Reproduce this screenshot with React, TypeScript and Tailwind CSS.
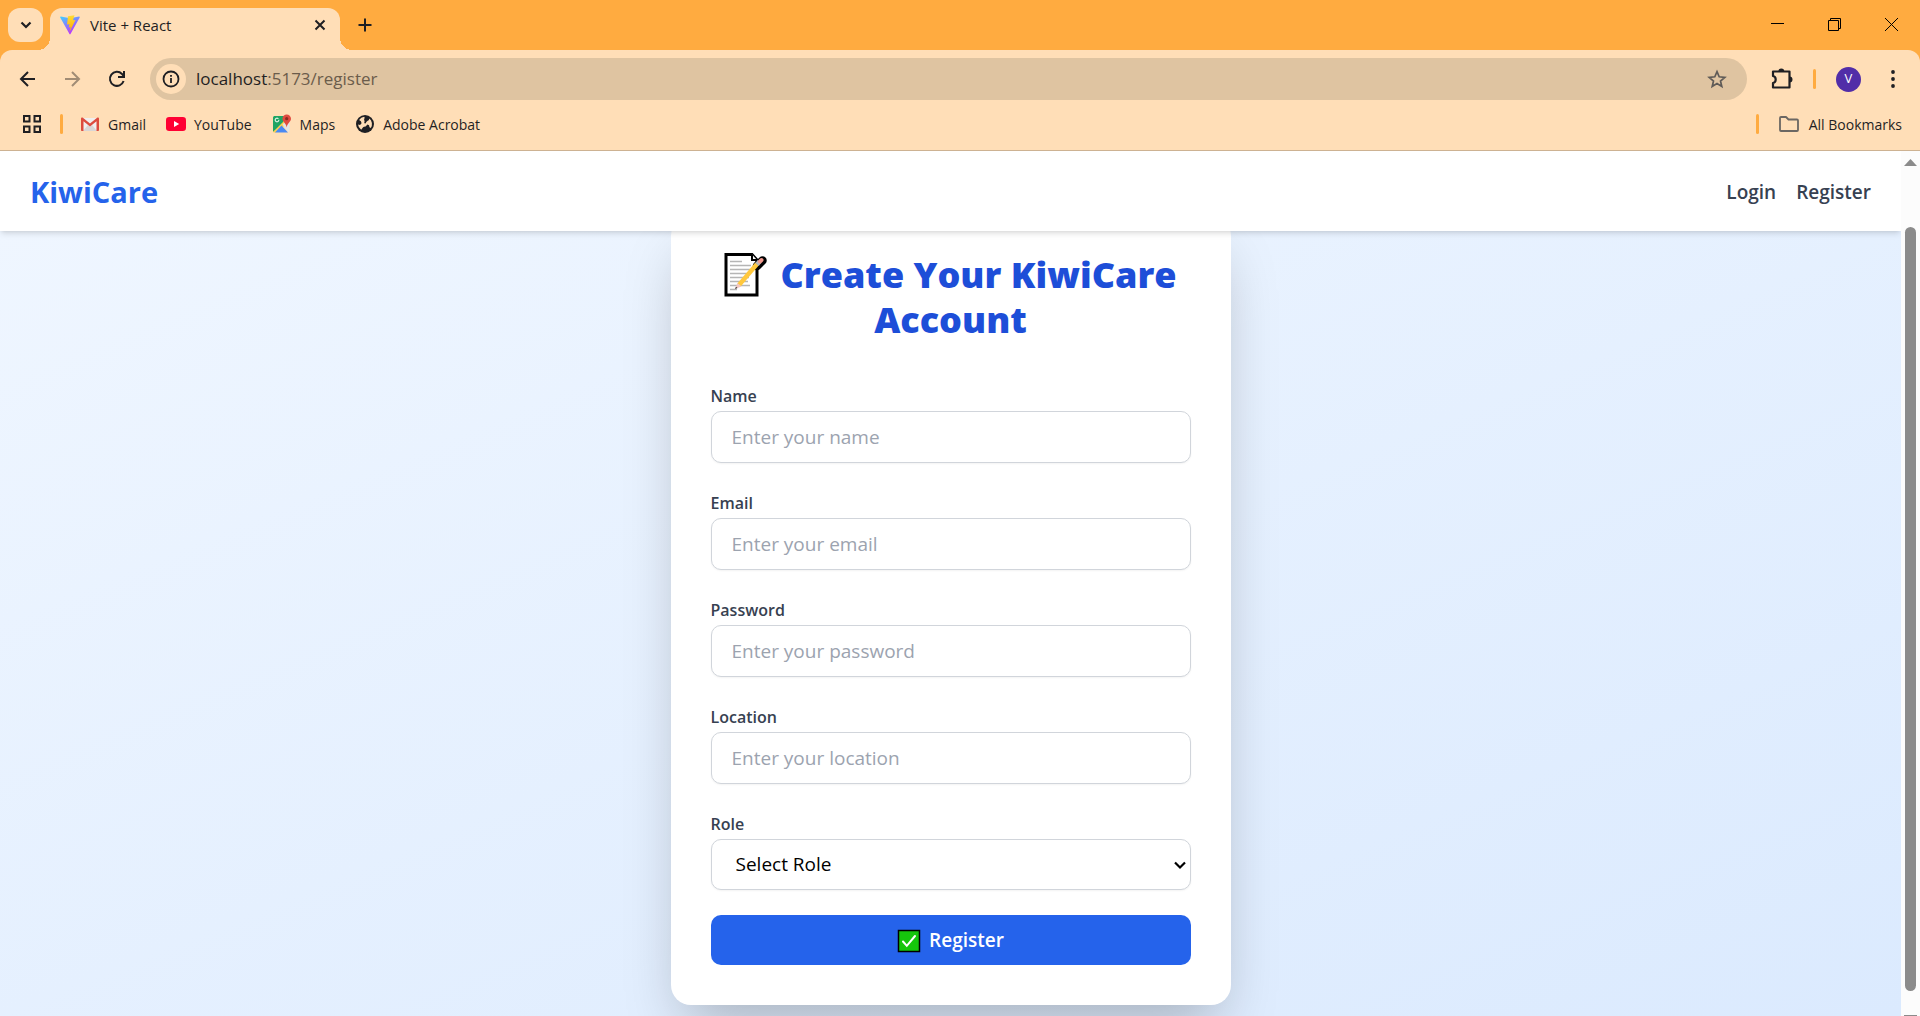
import React from "react";

const ink = "#1f1f23";

function ViteLogo() {
  return (
    <svg viewBox="0 0 20 20" className="size-5" aria-hidden="true">
      <defs>
        <linearGradient id="vite-body" x1="0" y1="0" x2="0.5" y2="1">
          <stop offset="0" stopColor="#41d1ff" />
          <stop offset="1" stopColor="#bd34fe" />
        </linearGradient>
        <linearGradient id="vite-bolt" x1="0.5" y1="0" x2="0.5" y2="1">
          <stop offset="0" stopColor="#ffdd35" />
          <stop offset="1" stopColor="#ffa800" />
        </linearGradient>
      </defs>
      <path d="M19.7 2.4 10.5 19a.6.6 0 0 1-1 0L.2 2.4a.6.6 0 0 1 .6-.8L10 3.200l9.100-1.600a.6.6 0 0 1 .6.8Z" fill="url(#vite-body)" />
      <path d="M14.500.2 8 1.200 7 9.500l2.500-.3L8.700 12.500l1.900-.4L9.500 17 15.500 5l-2.500.3Z" fill="url(#vite-bolt)" />
    </svg>
  );
}

function GmailIcon() {
  return (
    <svg viewBox="0 0 20 20" className="size-5" aria-hidden="true">
      <path d="M1.500 4h17v13h-17z" fill="#f1eeee" />
      <path d="M3 17 8 11l2 1.500L12 11l5 6z" fill="#d9d6d6" />
      <path d="M1 4.600C1 3.700 2 3.200 2.900 3.800L10 9.500l7.100-5.700c.9-.6 1.900-.1 1.900.8V16.200c0 .5-.4.8-.8.8H16.500V7.300L10 12.400 3.500 7.300V17H1.800a.8.800 0 0 1-.8-.8Z" fill="#dd4b3e" />
    </svg>
  );
}

function YouTubeIcon() {
  return (
    <svg viewBox="0 0 20 20" className="size-5" aria-hidden="true">
      <rect x="0" y="3" width="20" height="14" rx="3.200" fill="#ff0033" />
      <path d="m8 7 5.200 3L8 13Z" fill="#fff" />
    </svg>
  );
}

function MapsIcon() {
  return (
    <svg viewBox="0 0 20 20" className="size-5" aria-hidden="true">
      <path d="M3 2h10l-2 8-10 8V3.500C1 2.600 1.700 2 3 2Z" fill="#1fa463" />
      <path d="M1 18 14 5l3 3L4 18.500H2Z" fill="#ffd04b" />
      <path d="m9.500 11.500 6.500 7H3Z" fill="#4a89f3" />
      <path d="m10.500 10.500 4-4 3 2v8.500l-1 1.500Z" fill="#e4e4e6" />
      <circle cx="5" cy="6" r="1.900" fill="none" stroke="#fff" strokeWidth="1" strokeDasharray="10 2" />
      <path d="M14.700.5a4.300 4.300 0 0 0-4.300 4.300c0 3 3.600 4 4.300 8.700.7-4.700 4.300-5.700 4.300-8.700A4.300 4.300 0 0 0 14.700.5Z" fill="#e04a3f" />
      <circle cx="14.700" cy="4.700" r="1.600" fill="#8c2b22" />
    </svg>
  );
}

function GlobeIcon() {
  return (
    <svg viewBox="0 0 20 20" className="size-5" aria-hidden="true">
      <circle cx="10" cy="10" r="9" fill={ink} />
      <path d="M10.500 2.900a7 7 0 0 1 5.300 2.800c-.3 1.100-1.200 1-2.100 1.200-1 .2-.8 1.300-1.800 1.500-1 .2-1.600.3-1.500 1.200.1 1 1.300.5 2.300.6 1.300.1 1.600 1 2.700 1.100l1.500-.2a7.100 7.100 0 0 1-7.400 5.900v-1.600l1.500-1.300-.3-1.700-2.500-.6c-.7-1.600-2-2-3.500-2L3 9.600A7.100 7.100 0 0 1 6 4.300l.7 1.900 2.200.5 1.400-1.600Z" transform="rotate(-60 10 10)" fill="#ffdeb7" />
    </svg>
  );
}

function MemoEmoji() {
  return (
    <svg viewBox="0 0 44 44" className="mr-3 inline-block size-11 align-bottom" role="img" aria-label="Memo">
      <path d="M2 1.500h26l5 5.500V42H2Z" fill="#fff" stroke="#000" strokeWidth="3" />
      <path d="M28 1.500V7h5" fill="#fff" stroke="#000" strokeWidth="2" />
      <path d="M6 8.500h12M6 12.500h21M6 16.500h20M6 20.500h18M6 24.500h19M6 28.500h18M6 32.500h20M6 36.500h7" stroke="#b5b5b5" strokeWidth="1.600" />
      <path d="m33 13 5.500-5.500" stroke="#000" strokeWidth="8.500" strokeLinecap="round" />
      <path d="M15 32 33 11" stroke="#ffc83d" strokeWidth="4.500" />
      <path d="m33 11.500 2.500-3" stroke="#b9b9b9" strokeWidth="4.500" />
      <path d="m36 8.500 1.500-1.500" stroke="#f1998e" strokeWidth="4" strokeLinecap="round" />
      <path d="m11 36 2.500-6 4 3.500Z" fill="#f3c7c0" />
      <path d="m11 36 1-2.300 1.500 1.300Z" fill="#333" />
    </svg>
  );
}

function CheckEmoji() {
  return (
    <svg viewBox="0 0 24 24" className="size-6" role="img" aria-label="Check mark">
      <rect x="1.500" y="1.500" width="21" height="21" fill="#16c60c" stroke="#000" strokeWidth="1.500" />
      <path d="m6 12.500 3.800 4.300L18 7" fill="none" stroke="#fff" strokeWidth="2" strokeLinecap="round" />
    </svg>
  );
}

function TabStrip() {
  return (
    <div className="flex h-[50px] items-end bg-[#ffab40]">
      <button type="button" aria-label="Search tabs" className="mb-2 ml-2 flex h-[34px] w-[35px] shrink-0 items-center justify-center rounded-xl bg-[#ffdeb7]">
        <svg viewBox="0 0 12 12" className="size-3" fill="none" stroke={ink} strokeWidth="2.200" aria-hidden="true"><path d="m1.500 3.500 4.500 4.500 4.500-4.500" /></svg>
      </button>
      <div className="relative ml-[7px] flex h-[42px] w-[290px] shrink-0 items-center rounded-t-xl bg-[#ffdeb7] pb-2 pl-[10px] pr-[14px]">
        <span className="absolute bottom-0 -left-3 size-3 bg-[radial-gradient(circle_at_0_0,transparent_12px,#ffdeb7_12px)]" />
        <span className="absolute bottom-0 -right-3 size-3 bg-[radial-gradient(circle_at_100%_0,transparent_12px,#ffdeb7_12px)]" />
        <ViteLogo />
        <span className="ml-[10px] grow text-[15px] text-[#1f1f23]">Vite + React</span>
        <button type="button" aria-label="Close tab">
          <svg viewBox="0 0 12 12" className="size-3" stroke={ink} strokeWidth="2" aria-hidden="true"><path d="m1.500 1.500 9 9m0-9-9 9" /></svg>
        </button>
      </div>
      <button type="button" aria-label="New tab" className="mb-[18px] ml-[18px]">
        <svg viewBox="0 0 14 14" className="size-[14px]" stroke={ink} strokeWidth="2" aria-hidden="true"><path d="M7 .5v13M.5 7h13" /></svg>
      </button>
      <div className="ml-auto flex h-12 items-center gap-11 self-start pr-[22px]">
        <button type="button" aria-label="Minimize"><svg viewBox="0 0 13 13" className="size-[13px]" stroke="#000" aria-hidden="true"><path d="M0 5.500h13" /></svg></button>
        <button type="button" aria-label="Restore"><svg viewBox="0 0 13 13" className="size-[13px]" fill="none" stroke="#000" aria-hidden="true"><path d="M.5 2.500h10v10H.5ZM2.500 2.500v-2h10v10h-2" /></svg></button>
        <button type="button" aria-label="Close"><svg viewBox="0 0 13 13" className="size-[13px]" stroke="#000" aria-hidden="true"><path d="m0 0 13 13M13 0 0 13" /></svg></button>
      </div>
    </div>
  );
}

function Toolbar() {
  return (
    <div className="flex h-[58px] items-center">
      <button type="button" aria-label="Back" className="ml-[19px]">
        <svg viewBox="0 0 18 18" className="size-[18px]" fill="none" stroke={ink} strokeWidth="2" aria-hidden="true"><path d="M16 9H2.500M9 2 2 9l7 7" /></svg>
      </button>
      <button type="button" aria-label="Forward" className="ml-[26px]">
        <svg viewBox="0 0 18 18" className="size-[18px]" fill="none" stroke="#a18c75" strokeWidth="2" aria-hidden="true"><path d="M2 9h13.500M9 2l7 7-7 7" /></svg>
      </button>
      <button type="button" aria-label="Reload" className="ml-[27px]">
        <svg viewBox="0 0 18 18" className="size-[18px]" fill="none" stroke={ink} strokeWidth="2" aria-hidden="true"><path d="M15.600 11A7 7 0 1 1 14 4l1.500 2M16 1v6h-6" /></svg>
      </button>
      <div className="ml-6 flex h-[42px] grow items-center rounded-full bg-[#dfc4a1] pl-[6px] pr-5">
        <button type="button" aria-label="Site information" className="flex size-[30px] items-center justify-center rounded-full bg-[#ffdeb7]">
          <svg viewBox="0 0 18 18" className="size-[18px]" aria-hidden="true">
            <circle cx="9" cy="9" r="7.500" fill="none" stroke={ink} strokeWidth="1.800" />
            <path d="M9 8v5M9 5v1.800" stroke={ink} strokeWidth="1.800" />
          </svg>
        </button>
        <p className="ml-[10px] grow text-[17px] text-[#6b5c4b]"><span className="text-[#1f1f23]">localhost</span>:5173/register</p>
        <button type="button" aria-label="Bookmark this tab">
          <svg viewBox="0 0 20 20" className="size-5" fill="none" stroke="#5f5b57" strokeWidth="1.700" aria-hidden="true"><path d="m10 2.600 2.200 5.200 5.600.5-4.300 3.700 1.300 5.500-4.800-2.900-4.800 2.900L6.500 12 2.200 8.300l5.600-.5Z" /></svg>
        </button>
      </div>
      <button type="button" aria-label="Extensions" className="ml-6">
        <svg viewBox="0 0 22 22" className="size-[22px]" aria-hidden="true">
          <path d="M2 3.500h16.500v16H2v-4.500c3.600-.7 3.600-6.300 0-7Z" fill="none" stroke={ink} strokeWidth="2.200" strokeLinejoin="round" />
          <path d="M7.300 3.500a3 3 0 0 1 6 0ZM18.500 8.500a3 3 0 0 1 0 6Z" fill={ink} />
        </svg>
      </button>
      <span className="ml-5 h-5 w-[3px] rounded-full bg-[#ffab40]" />
      <button type="button" aria-label="Profile" className="ml-5 flex size-[25px] items-center justify-center rounded-full bg-[#512da8] text-[13px] text-white">V</button>
      <button type="button" aria-label="Menu" className="ml-[23px] mr-[18px]">
        <svg viewBox="0 0 18 18" className="size-[18px]" fill={ink} aria-hidden="true"><circle cx="9" cy="2" r="1.900" /><circle cx="9" cy="9" r="1.900" /><circle cx="9" cy="16" r="1.900" /></svg>
      </button>
    </div>
  );
}

const bookmarks = [
  { name: "Gmail", icon: <GmailIcon /> },
  { name: "YouTube", icon: <YouTubeIcon /> },
  { name: "Maps", icon: <MapsIcon /> },
  { name: "Adobe Acrobat", icon: <GlobeIcon /> },
];

function BookmarksBar() {
  return (
    <nav aria-label="Bookmarks" className="flex h-8 items-center text-[14px] text-[#1f1f23]">
      <button type="button" aria-label="Apps" className="ml-[23px]">
        <svg viewBox="0 0 18 18" className="size-[18px]" fill="none" stroke={ink} strokeWidth="2" aria-hidden="true"><path d="M1 1h5.500v5.500H1ZM11.500 1H17v5.500h-5.500ZM1 11.500h5.500V17H1ZM11.500 11.500H17V17h-5.500Z" /></svg>
      </button>
      <span className="ml-[19px] h-5 w-[3px] rounded-full bg-[#ffab40]" />
      <div className="ml-[17px] flex gap-5">
        {bookmarks.map((b) => (
          <a key={b.name} href="#" className="flex items-center gap-2">{b.icon}{b.name}</a>
        ))}
      </div>
      <span className="ml-auto h-5 w-[3px] rounded-full bg-[#ffab40]" />
      <button type="button" className="ml-5 mr-[18px] flex items-center gap-[10px]">
        <svg viewBox="0 0 20 16" className="h-4 w-5" fill="none" stroke="#6b6763" strokeWidth="1.800" strokeLinejoin="round" aria-hidden="true"><path d="M1 2a1 1 0 0 1 1-1h5l2.500 2.500H18a1 1 0 0 1 1 1V14a1 1 0 0 1-1 1H2a1 1 0 0 1-1-1Z" /></svg>
        All Bookmarks
      </button>
    </nav>
  );
}

const fields = [
  { id: "name", label: "Name", type: "text", placeholder: "Enter your name" },
  { id: "email", label: "Email", type: "email", placeholder: "Enter your email" },
  { id: "password", label: "Password", type: "password", placeholder: "Enter your password" },
  { id: "location", label: "Location", type: "text", placeholder: "Enter your location" },
];

function RegisterForm() {
  return (
    <form className="-mt-[15px] w-[560px] max-w-full shrink-0 rounded-[20px] bg-white px-10 pt-9 pb-10 shadow-[0_30px_60px_-15px_rgba(0,0,0,0.27)]">
      <h2 className="mb-11 text-center text-[36px] leading-[45px] font-extrabold text-[#1d4ed8]"><MemoEmoji />Create Your KiwiCare Account</h2>
      <div className="flex flex-col gap-[30px]">
        {fields.map((f) => (
          <div key={f.id}>
            <label htmlFor={f.id} className="block pb-[5px] text-[16px] leading-5 font-semibold text-[#374151]">{f.label}</label>
            <input id={f.id} type={f.type} placeholder={f.placeholder} className="block h-[52px] w-full rounded-[10px] border border-[#d1d5db] bg-white px-5 text-[19px] shadow-xs placeholder:text-[#9ca3af]" />
          </div>
        ))}
        <div>
          <label htmlFor="role" className="block pb-[5px] text-[16px] leading-5 font-semibold text-[#374151]">Role</label>
          <div className="relative">
            <select id="role" className="block h-[51px] w-full appearance-none rounded-[10px] border border-[#d1d5db] bg-white px-6 text-[19px] text-black shadow-xs">
              <option>Select Role</option>
              <option>Patient</option>
              <option>Doctor</option>
            </select>
            <svg viewBox="0 0 12 12" className="pointer-events-none absolute top-5 right-[5px] size-3" fill="none" stroke="#000" strokeWidth="2.200" aria-hidden="true"><path d="m1 3.500 5 5 5-5" /></svg>
          </div>
        </div>
      </div>
      <button type="submit" className="mt-[25px] flex h-[50px] w-full items-center justify-center gap-2 rounded-[10px] bg-[#2563eb] pt-px text-[19px] font-semibold text-white"><CheckEmoji />Register</button>
    </form>
  );
}

export default function App() {
  return (
    <div className="flex h-screen flex-col overflow-hidden bg-white font-['Open_Sans',sans-serif]">
      <header className="shrink-0 bg-[#ffab40]">
        <TabStrip />
        <div className="h-[101px] rounded-t-xl border-b border-[#cdb292] bg-[#ffdeb7]">
          <Toolbar />
          <BookmarksBar />
        </div>
      </header>
      <div className="flex min-h-0 grow">
        <div className="flex min-w-0 grow flex-col overflow-hidden">
          <nav aria-label="Main" className="relative z-10 flex h-20 shrink-0 items-center justify-between bg-white px-[30px] pt-0.5 shadow-md">
            <a href="#" className="text-[29px] font-bold text-[#2563eb]">KiwiCare</a>
            <div className="flex gap-5 text-[19px] font-semibold text-[#374151]">
              <a href="#">Login</a>
              <a href="#">Register</a>
            </div>
          </nav>
          <main className="flex min-h-0 grow items-start justify-center bg-linear-to-br from-[#eff6ff] to-[#dbeafe]"><RegisterForm /></main>
        </div>
        <div aria-hidden="true" className="flex w-[19px] shrink-0 flex-col items-center overflow-hidden bg-[#fcfcfc] pt-2">
          <svg viewBox="0 0 13 7" className="h-[7px] w-[13px] shrink-0"><path d="M6.500 0 13 7H0Z" fill="#8b8b8b" /></svg>
          <div className="mt-[61px] mb-6 w-[11px] grow rounded-full bg-[#8b8b8b]" />
          <div className="h-px w-[13px] shrink-0 bg-[#8b8b8b]" />
        </div>
      </div>
    </div>
  );
}
